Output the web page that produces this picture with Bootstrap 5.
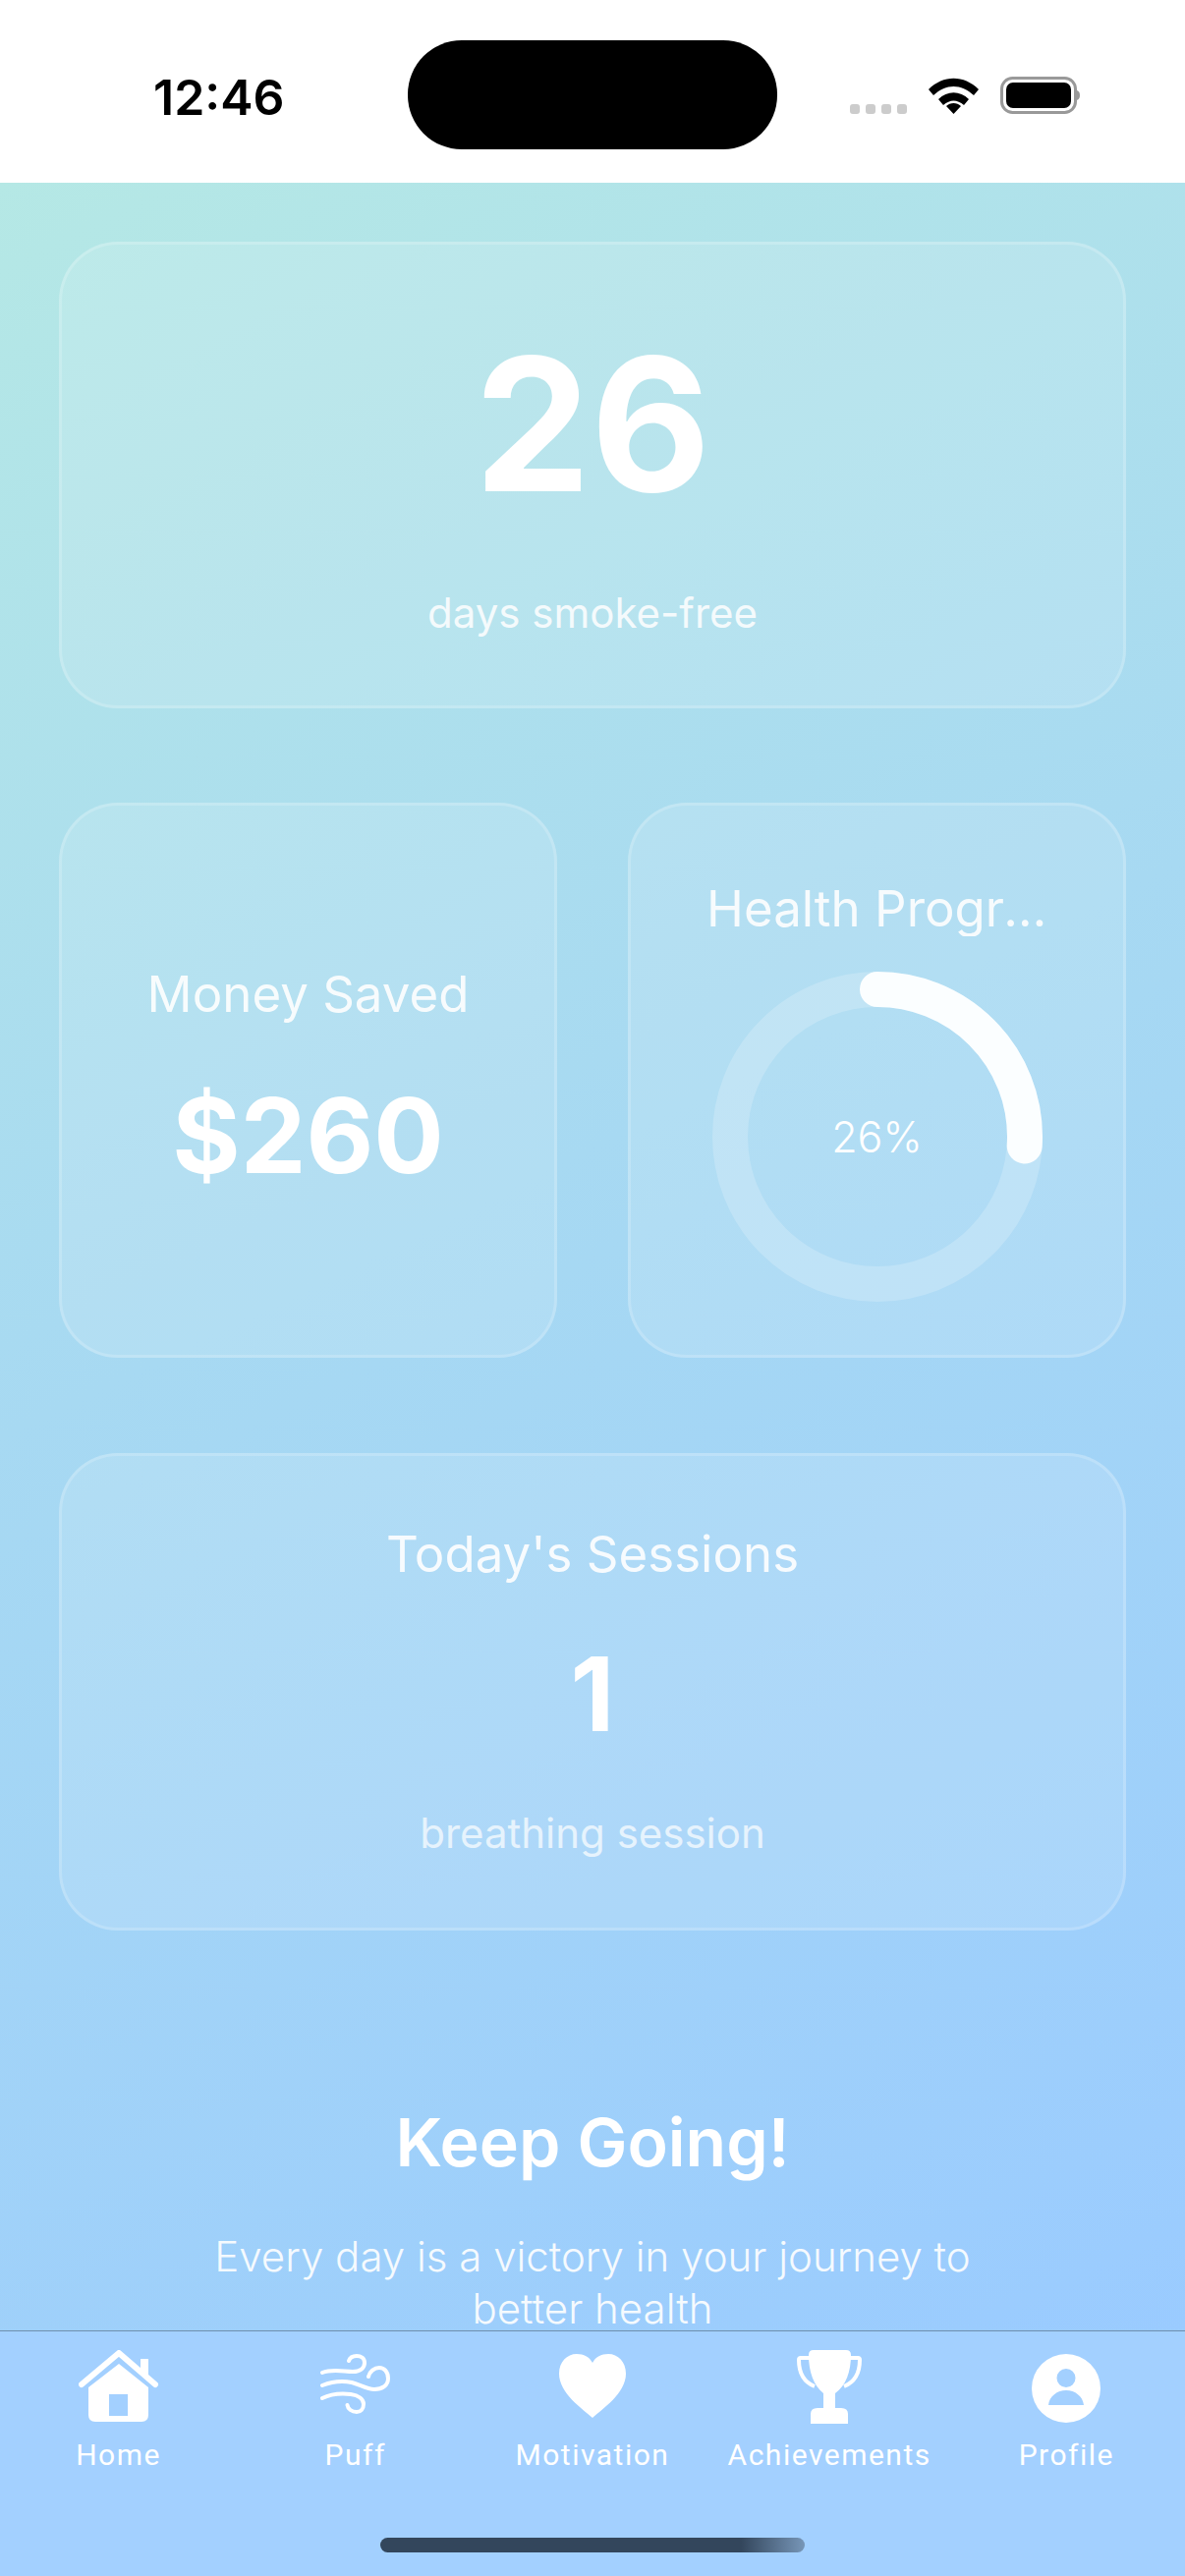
<!DOCTYPE html>
<html lang="en">
<head>
    <meta charset="UTF-8">
    <meta name="viewport" content="width=device-width, initial-scale=1.0">
    <title>Dashboard</title>
    <link href="https://cdn.jsdelivr.net/npm/bootstrap@5.3.0/dist/css/bootstrap.min.css" rel="stylesheet">
    <style>
        html, body { height: 2622px; overflow: hidden; }
        body { font-family: Inter, "Liberation Sans", sans-serif; color: #fff; background: #fff; }
        .status-bar { height: 186px; background: #fff; color: #000; padding-left: 156px; }
        .clock { font-size: 50px; font-weight: 600; line-height: 50px; margin-top: 74px; width: 132px; white-space: nowrap; }
        .island { width: 376px; height: 111px; margin: 41px 0 0 127px; background: #000; border-radius: 55px; }
        .status-icons { margin: 78px 0 0 74px; height: 38px; }
        .signal-dots { margin-top: 28px; gap: 6px; }
        .signal-dots span { width: 10px; height: 10px; background: #ccc; border-radius: 3px; }
        .wifi-icon { margin: 1px 0 0 22px; }
        .battery-icon { margin-left: 22px; }
        .screen { height: 2186px; padding: 60px 60px 0; background: linear-gradient(154deg, #b5e8e5 0%, #a7d9f2 46%, #9acbff 100%); overflow: hidden; }
        .glass { background: rgba(255,255,255,.13); border: 3px solid rgba(255,255,255,.18); border-radius: 60px; color: #fff; }
        .glass-top { height: 475px; margin-bottom: 96px; padding-top: 18px; }
        .pair { gap: 72px; margin-bottom: 97px; }
        .pair .glass { height: 565px; width: 507px; }
        .glass-health { padding-top: 23px; }
        .glass-sessions { height: 486px; }
        .days-num { font-size: 188px; font-weight: 700; line-height: 190px; }
        .days-label { font-size: 42px; line-height: 48px; opacity: .85; margin-top: 73px; }
        .card-title-text { font-size: 51px; line-height: 56px; opacity: .9; }
        .money-num { font-size: 106px; font-weight: 700; line-height: 120px; margin-top: 56px; }
        .health-title { padding: 0 71px 0 77px; width: 100%; }
        .ring-box { width: 336px; height: 336px; margin-top: 36px; }
        .ring-text { font-size: 43px; font-weight: 300; }
        .sessions-num { font-size: 104px; font-weight: 700; line-height: 120px; margin-top: 54px; }
        .sessions-label { font-size: 42px; line-height: 48px; opacity: .7; margin-top: 58px; }
        .cheer { margin-top: 175px; }
        .cheer h2 { font-size: 68px; font-weight: 600; line-height: 80px; margin: 0; }
        .cheer p { font-size: 42px; font-weight: 300; line-height: 53px; opacity: .9; margin: 50px auto 0; width: 800px; }
        .tab-bar { height: 250px; position: relative; background: #a3d0ff; border-top: 1px solid #6f8fad; }
        .tab-item { width: 20%; padding-top: 19px; }
        .tab-icon { height: 76px; }
        .tab-label { font-family: Roboto, Inter, sans-serif; font-size: 30px; line-height: 34px; letter-spacing: 1.5px; margin-top: 14px; white-space: nowrap; }
        .home-bar { width: 432px; height: 15px; position: absolute; left: 387px; top: 210px; border-radius: 8px; background: linear-gradient(90deg, #33465c 0%, #33465c 85%, #7796b8 100%); }
    </style>
</head>
<body>
    <div class="status-bar d-flex align-items-start">
        <div class="clock">12:46</div>
        <div class="island"></div>
        <div class="status-icons d-flex">
            <div class="signal-dots d-flex"><span></span><span></span><span></span><span></span></div>
            <svg width="51" height="37" viewBox="0 0 51 37" class="wifi-icon">
                <path d="M0 12 C15 -3 36 -3 51 12 L46 18 C33 6 18 6 5 18Z M10 22 C19 13 32 13 41 22 L36 28 C29 22 22 22 15 28Z M18 29 C22 25 29 25 33 29 L25.5 37Z" fill="#000"/>
            </svg>
            <svg width="83" height="38" viewBox="0 0 83 38" class="battery-icon">
                <rect x="1.5" y="1.5" width="75" height="35" rx="11" fill="none" stroke="#999" stroke-width="3"/>
                <rect x="6" y="6" width="66" height="26" rx="7" fill="#000"/>
                <path d="M78 14 C82 15 82 23 78 24Z" fill="#999"/>
            </svg>
        </div>
    </div>

    <main class="screen">
        <div class="card glass glass-top align-items-center justify-content-center text-center">
            <div class="days-num">26</div>
            <div class="days-label">days smoke-free</div>
        </div>

        <div class="d-flex pair">
            <div class="card glass align-items-center justify-content-center text-center">
                <div class="card-title-text">Money Saved</div>
                <div class="money-num">$260</div>
            </div>
            <div class="card glass glass-health align-items-center justify-content-center text-center">
                <div class="card-title-text text-truncate health-title">Health Progress</div>
                <div class="ring-box position-relative d-flex align-items-center justify-content-center">
                    <svg width="336" height="336" viewBox="0 0 336 336" class="position-absolute top-0 start-0">
                        <circle cx="168" cy="168" r="150" fill="none" stroke="rgba(255,255,255,.2)" stroke-width="36"/>
                        <circle cx="168" cy="168" r="150" fill="none" stroke="#fbfeff" stroke-width="36" stroke-linecap="round" stroke-dasharray="245 1000" transform="rotate(-90 168 168)"/>
                    </svg>
                    <span class="ring-text">26%</span>
                </div>
            </div>
        </div>

        <div class="card glass glass-sessions align-items-center justify-content-center text-center">
            <div class="card-title-text">Today's Sessions</div>
            <div class="sessions-num">1</div>
            <div class="sessions-label">breathing session</div>
        </div>

        <div class="cheer text-center">
            <h2>Keep Going!</h2>
            <p>Every day is a victory in your journey to better health</p>
        </div>
    </main>

    <nav class="tab-bar d-flex">
        <div class="tab-item text-center">
            <div class="tab-icon">
                <svg width="82" height="74" viewBox="0 0 82 74" fill="#fff">
                    <path d="M3 35 L41 3 L63 22 M41 3 L78 35" fill="none" stroke="#fff" stroke-width="6" stroke-linecap="round" stroke-linejoin="round"/>
                    <path d="M63 9 H71 V28 L63 21Z"/>
                    <path fill-rule="evenodd" d="M41 14 L71 38 V66 Q71 73 64 73 H17 Q10 73 10 66 V38Z M31 45 V67 H50 V45Z"/>
                </svg>
            </div>
            <div class="tab-label">Home</div>
        </div>
        <div class="tab-item text-center">
            <div class="tab-icon">
                <svg width="71" height="62" viewBox="0 0 71 62" fill="none" stroke="#fff" stroke-width="4" stroke-linecap="round" class="mt-1">
                    <path d="M2 19 C12 15 24 18 33 18 C41 18 45 14 45 9 C45 4 41 2 37 2 C33 2 30 4 29 7"/>
                    <path d="M2 32 C12 28 22 27 32 29 C40 31 47 36 55 36 C63 36 69 32 69 25 C69 18 65 14 60 14 C55 14 50 18 49 23"/>
                    <path d="M2 45 C10 41 22 40 31 41 C39 42 44 46 44 51 C44 56 41 59 37 59 C32 59 28 56 27.5 52"/>
                </svg>
            </div>
            <div class="tab-label">Puff</div>
        </div>
        <div class="tab-item text-center">
            <div class="tab-icon">
                <svg width="68" height="65" viewBox="0 0 68 65" fill="#fff" class="mt-1">
                    <path d="M34 65 C24 56 0 40 0 20 C0 8 8 0 18 0 C25 0 31 3 34 9 C37 3 43 0 50 0 C60 0 68 8 68 20 C68 40 44 56 34 65Z"/>
                </svg>
            </div>
            <div class="tab-label">Motivation</div>
        </div>
        <div class="tab-item text-center">
            <div class="tab-icon">
                <svg width="66" height="75" viewBox="0 0 66 75" fill="#fff">
                    <path d="M12 5 Q12 0 17 0 H50 Q55 0 55 5 C55 22 50 36 39 44 V59 H45 Q52 59 52 65 V75 H14 V65 Q14 59 21 59 H27 V44 C17 36 12 22 12 5Z"/>
                    <path d="M14 8 H4 Q2 8 2 10 C2 24 8 33 18 37 M53 8 H62 Q64 8 64 10 C64 24 58 33 48 37" fill="none" stroke="#fff" stroke-width="4"/>
                </svg>
            </div>
            <div class="tab-label">Achievements</div>
        </div>
        <div class="tab-item text-center">
            <div class="tab-icon">
                <svg width="70" height="70" viewBox="0 0 70 70" fill="#fff" class="mt-1">
                    <path fill-rule="evenodd" d="M35 0 A35 35 0 1 0 35 70 A35 35 0 1 0 35 0Z M35 15 A9.5 9.5 0 1 0 35 34 A9.5 9.5 0 1 0 35 15Z M17 52 H53 C52 43 44 37 35 37 C26 37 18 43 17 52Z"/>
                </svg>
            </div>
            <div class="tab-label">Profile</div>
        </div>
        <div class="home-bar"></div>
    </nav>

    <script src="https://cdn.jsdelivr.net/npm/bootstrap@5.3.0/dist/js/bootstrap.bundle.min.js"></script>
</body>
</html>
